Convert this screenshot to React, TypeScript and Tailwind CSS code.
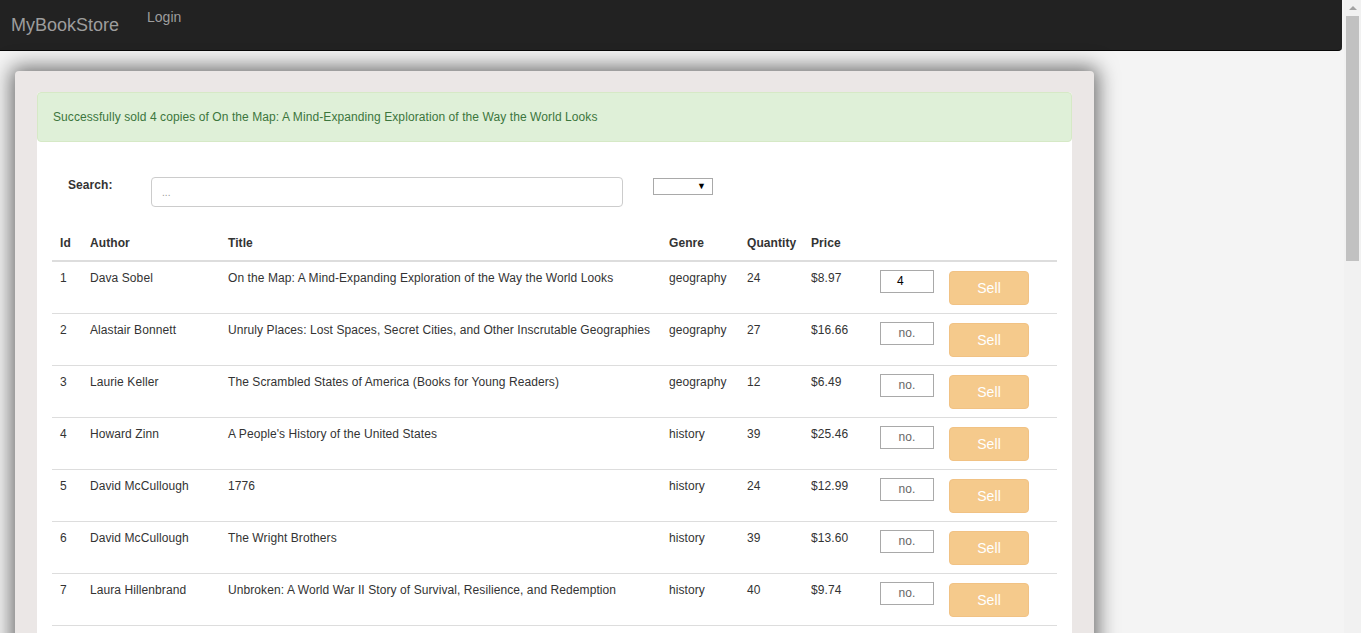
import React from "react";

const books = [
  { id: 1, author: "Dava Sobel", title: "On the Map: A Mind-Expanding Exploration of the Way the World Looks", genre: "geography", qty: 24, price: "$8.97", val: "4" },
  { id: 2, author: "Alastair Bonnett", title: "Unruly Places: Lost Spaces, Secret Cities, and Other Inscrutable Geographies", genre: "geography", qty: 27, price: "$16.66", val: "" },
  { id: 3, author: "Laurie Keller", title: "The Scrambled States of America (Books for Young Readers)", genre: "geography", qty: 12, price: "$6.49", val: "" },
  { id: 4, author: "Howard Zinn", title: "A People's History of the United States", genre: "history", qty: 39, price: "$25.46", val: "" },
  { id: 5, author: "David McCullough", title: "1776", genre: "history", qty: 24, price: "$12.99", val: "" },
  { id: 6, author: "David McCullough", title: "The Wright Brothers", genre: "history", qty: 39, price: "$13.60", val: "" },
  { id: 7, author: "Laura Hillenbrand", title: "Unbroken: A World War II Story of Survival, Resilience, and Redemption", genre: "history", qty: 40, price: "$9.74", val: "" },
];

export default function App() {
  return (
    <div
      className="h-[633px] w-[1361px] overflow-hidden flex bg-[#f4f4f4] text-[#333]"
      style={{ fontFamily: '"Liberation Sans", Arial, sans-serif' }}
    >
      <div className="flex-1 overflow-hidden flex flex-col">
        <nav className="h-[51px] shrink-0 bg-[#222] border-b border-[#080808] rounded-br-[4px] mr-[2px] flex items-start">
          <span className="text-[18px] leading-[20px] text-[#9d9d9d] pl-[11px] pt-[15px]">MyBookStore</span>
          <span className="text-[14px] leading-[20px] text-[#9d9d9d] pl-[28px] pt-[7px]">Login</span>
        </nav>
        <div className="pt-[20px] pl-[15px]">
          <div className="w-[1079px] bg-[#ebe7e6] rounded-[4px] px-[22px] pt-[21px] h-[700px] shadow-[0_0_20px_4px_rgba(0,0,0,0.55)]">
            <div className="bg-white rounded-t-[4px] h-full tracking-[0.085px]">
              <div className="h-[50px] bg-[#dff0d8] border border-[#d6e9c6] rounded-[4px] text-[#3c763d] text-[12px] leading-[17px] px-[15px] flex items-center">
                Successfully sold 4 copies of On the Map: A Mind-Expanding Exploration of the Way the World Looks
              </div>
              <div className="flex items-start pt-[35px] pl-[31px]">
                <span className="font-bold text-[12px] leading-[17px] w-[83px]">Search:</span>
                <div className="w-[472px] h-[30px] border border-[#ccc] rounded-[4px] text-[10px] text-[#999] pl-[10px] pt-[9px] leading-[12px]">...</div>
                <div className="ml-[30px] mt-[1px] w-[60px] h-[17px] border border-[#a9a9a9] bg-white flex items-center justify-end pr-[6px] text-[9px] text-black">▼</div>
              </div>
              <div className="px-[15px] pt-[20px]">
                <table className="table-fixed w-[1005px] border-collapse text-[12px] leading-[17px]">
                  <colgroup>
                    <col className="w-[30px]" />
                    <col className="w-[138px]" />
                    <col className="w-[441px]" />
                    <col className="w-[78px]" />
                    <col className="w-[64px]" />
                    <col className="w-[69px]" />
                    <col className="w-[69px]" />
                    <col className="w-[116px]" />
                  </colgroup>
                  <thead>
                    <tr className="border-b-2 border-[#ddd]">
                      {["Id", "Author", "Title", "Genre", "Quantity", "Price", "", ""].map((h, i) => (
                        <th key={i} className="text-left font-bold p-[8px] whitespace-nowrap">{h}</th>
                      ))}
                    </tr>
                  </thead>
                  <tbody>
                    {books.map((b) => (
                      <tr key={b.id} className="border-b border-[#ddd] align-top">
                        <td className="p-[8px] h-[52px]">{b.id}</td>
                        <td className="p-[8px] whitespace-nowrap">{b.author}</td>
                        <td className="p-[8px] whitespace-nowrap">{b.title}</td>
                        <td className="p-[8px]">{b.genre}</td>
                        <td className="p-[8px]">{b.qty}</td>
                        <td className="p-[8px]">{b.price}</td>
                        <td className="p-[8px]">
                          <div className="w-[54px] h-[23px] border border-[#a9a9a9] bg-white flex items-center justify-center text-[12px]">
                            {b.val ? <span className="text-black pr-[13px]">4</span> : <span className="text-[#666]">no.</span>}
                          </div>
                        </td>
                        <td className="px-[8px] pt-[9px]">
                          <div className="w-[80px] h-[34px] rounded-[4px] bg-[#f5ca8c] border border-[#f1c284] text-white text-[14px] flex items-center justify-center pt-[1px]">
                            Sell
                          </div>
                        </td>
                      </tr>
                    ))}
                  </tbody>
                </table>
              </div>
            </div>
          </div>
        </div>
      </div>
      <div className="w-[17px] shrink-0 bg-[#f1f1f1] flex flex-col items-center">
        <div className="h-[15px] flex items-center justify-center">
          <div className="w-0 h-0 border-l-[4px] border-r-[4px] border-b-[4px] border-l-transparent border-r-transparent border-b-[#a3a3a3]" />
        </div>
        <div className="w-[13px] h-[245px] bg-[#c1c1c1] mt-[1px]" />
      </div>
    </div>
  );
}
